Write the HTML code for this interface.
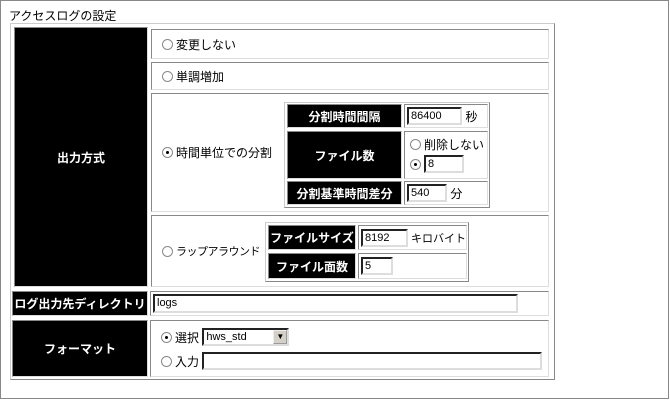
<!DOCTYPE html>
<html><head><meta charset="utf-8"><style>
*{margin:0;padding:0;box-sizing:border-box}
body{width:670px;height:400px;background:#fff;font:12px "Liberation Sans","Noto Sans CJK JP",sans-serif;color:#000;position:relative;overflow:hidden;white-space:nowrap}
.a{position:absolute}
.frame{left:0;top:0;width:669px;height:399px;border:1px solid #888}
.grp{border:1px solid;border-color:#ccc #888 #888 #ccc}
.cell{border:1px solid;border-color:#888 #ddd #ddd #888;background:#fff}
.blk{background:#000;color:#fff;font-weight:bold;display:flex;align-items:center;justify-content:center;border:1px solid;border-color:#888 #ddd #ddd #888}
.inp{border:2px inset #ddd;border-color:#777 #ddd #ddd #777;background:#fff;font-size:11px;padding-left:2px;line-height:14px}
.r{display:inline-block;width:11px;height:11px;border-radius:50%;border:1px solid #888;background:#fff;vertical-align:-1px;margin-right:3px;position:relative;flex:none}
.r.on::after{content:"";position:absolute;left:3px;top:3px;width:3px;height:3px;background:#000;border-radius:50%}
.t{display:flex;align-items:center}
</style></head><body>
<div class="a frame"></div>
<div class="a" style="left:9px;top:7px">アクセスログの設定</div>
<div class="a grp" style="left:10px;top:23px;width:545px;height:357px"></div>

<div class="a blk" style="left:14px;top:27px;width:134px;height:260px">出力方式</div>
<div class="a cell t" style="left:151px;top:29px;width:398px;height:30px;padding-left:10px"><span class="r"></span>変更しない</div>
<div class="a cell t" style="left:151px;top:62px;width:398px;height:28px;padding-left:10px"><span class="r"></span>単調増加</div>
<div class="a cell t" style="left:151px;top:93px;width:398px;height:119px;padding-left:10px"><span class="r on"></span>時間単位での分割</div>
<div class="a cell t" style="left:151px;top:215px;width:398px;height:72px;padding-left:10px;font-size:11px;letter-spacing:-0.5px"><span class="r"></span>ラップアラウンド</div>

<div class="a grp" style="left:284px;top:102px;width:206px;height:106px"></div>
<div class="a blk" style="left:287px;top:104px;width:115px;height:24px">分割時間間隔</div>
<div class="a cell t" style="left:404px;top:104px;width:84px;height:24px;padding-left:2px"><div class="inp" style="width:55px;height:18px">86400</div>&nbsp;秒</div>
<div class="a blk" style="left:287px;top:131px;width:115px;height:48px">ファイル数</div>
<div class="a cell" style="left:404px;top:131px;width:84px;height:48px;padding:4px 0 0 5px"><div><span class="r"></span>削除しない</div><div class="t" style="margin-top:2px"><span class="r on"></span><div class="inp" style="width:40px;height:18px">8</div></div></div>
<div class="a blk" style="left:287px;top:181px;width:115px;height:24px">分割基準時間差分</div>
<div class="a cell t" style="left:404px;top:181px;width:84px;height:24px;padding-left:2px"><div class="inp" style="width:40px;height:18px">540</div>&nbsp;分</div>

<div class="a grp" style="left:265px;top:222px;width:204px;height:60px"></div>
<div class="a blk" style="left:268px;top:225px;width:88px;height:25px">ファイルサイズ</div>
<div class="a cell t" style="left:358px;top:225px;width:109px;height:25px;padding-left:2px;font-size:11px"><div class="inp" style="width:50px;height:18px">8192</div>&nbsp;キロバイト</div>
<div class="a blk" style="left:268px;top:253px;width:88px;height:26px">ファイル面数</div>
<div class="a cell t" style="left:358px;top:253px;width:109px;height:26px;padding-left:2px"><div class="inp" style="width:32px;height:18px">5</div></div>

<div class="a blk" style="left:12px;top:291px;width:136px;height:25px">ログ出力先ディレクトリ</div>
<div class="a cell t" style="left:150px;top:291px;width:399px;height:25px;padding-left:2px"><div class="inp" style="width:365px;height:19px">logs</div></div>

<div class="a blk" style="left:12px;top:320px;width:136px;height:57px">フォーマット</div>
<div class="a cell" style="left:150px;top:320px;width:399px;height:57px;padding:7px 0 0 10px">
<div class="t"><span class="r on"></span>選択&nbsp;<div class="inp" style="width:87px;height:18px;position:relative">hws_std<span style="position:absolute;right:0;top:0;width:14px;height:14px;background:#d4d0c8;border:1px outset #eee;font-size:8px;text-align:center;line-height:12px">▼</span></div></div>
<div class="t" style="margin-top:6px"><span class="r"></span>入力&nbsp;<div class="inp" style="width:340px;height:18px"></div></div>
</div>
</body></html>
